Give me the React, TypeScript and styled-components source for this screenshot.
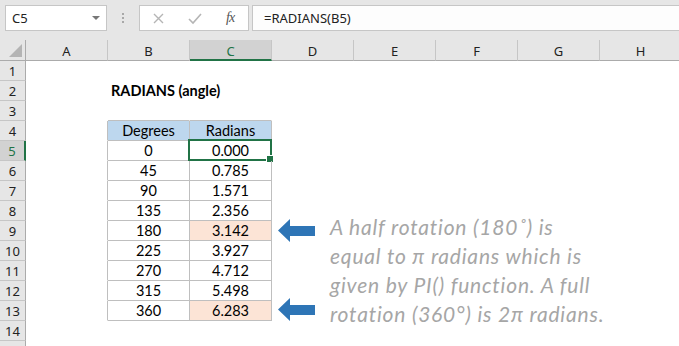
import React from "react"
import styled, { createGlobalStyle } from "styled-components"

const GlobalStyle = createGlobalStyle`
  html, body {
    margin: 0;
    padding: 0;
    background: #ffffff;
    font-family: "Lato", "Liberation Sans", sans-serif;
  }
`

const green = "#217346"
const headerBg = "#e6e6e6"
const tableBorder = "#bfbfbf"

const Window = styled.div`
  width: 679px;
  height: 346px;
  overflow: hidden;
  position: relative;
  background: #ffffff;
`

const Toolbar = styled.div`
  height: 40px;
  background: ${headerBg};
  display: flex;
  align-items: flex-start;
  padding-top: 5px;
  box-sizing: border-box;
`

const NameBox = styled.div`
  margin-left: 5px;
  width: 102px;
  height: 26px;
  box-sizing: border-box;
  background: #ffffff;
  border: 1px solid #c6c6c6;
  display: flex;
  align-items: center;
  justify-content: space-between;
  padding: 0 6px 0 6px;
  font-family: "Noto Sans", "DejaVu Sans", sans-serif;
  font-size: 13px;
  color: #222;
`

const DropArrow = styled.span`
  width: 0;
  height: 0;
  border-left: 4px solid transparent;
  border-right: 4px solid transparent;
  border-top: 4px solid #777;
`

const Grip = styled.div`
  width: 32px;
  height: 26px;
  display: flex;
  flex-direction: column;
  align-items: center;
  justify-content: center;
  gap: 2px;
  & > span {
    width: 2px;
    height: 2px;
    background: #a8a8a8;
  }
`

const FxBox = styled.div`
  width: 110px;
  height: 26px;
  box-sizing: border-box;
  background: #ffffff;
  border: 1px solid #c6c6c6;
  display: flex;
  align-items: center;
  padding-left: 12px;
  color: #b5b5b5;
  & > svg + svg {
    margin-left: 22px;
  }
`

const Fx = styled.span`
  margin-left: 23px;
  font-family: "Liberation Serif", serif;
  font-style: italic;
  font-size: 14px;
  color: #555;
  letter-spacing: -1px;
`

const FormulaBox = styled.div`
  flex: 1;
  margin-left: 3px;
  height: 26px;
  box-sizing: border-box;
  background: #fdfdfd;
  border: 1px solid #c6c6c6;
  border-right: none;
  display: flex;
  align-items: center;
  padding-left: 11px;
  font-family: "Noto Sans", "DejaVu Sans", sans-serif;
  font-size: 13px;
  color: #222;
`

const Sheet = styled.div`
  display: grid;
  grid-template-columns: 26px repeat(8, 82px);
  grid-template-rows: 21px repeat(15, 20px);
  position: relative;
`

const Corner = styled.div`
  background: ${headerBg};
  border-right: 1px solid #ababab;
  border-bottom: 1px solid #ababab;
  box-sizing: border-box;
  position: relative;
  &::after {
    content: "";
    position: absolute;
    right: 3px;
    bottom: 3px;
    width: 0;
    height: 0;
    border-left: 13px solid transparent;
    border-bottom: 13px solid #b4b4b4;
  }
`

const ColHead = styled.div<{ $active?: boolean }>`
  background: ${(p) => (p.$active ? "#d2d2d2" : headerBg)};
  border-right: 1px solid #c6c6c6;
  border-bottom: ${(p) => (p.$active ? `2px solid ${green}` : "1px solid #ababab")};
  box-sizing: border-box;
  display: flex;
  align-items: center;
  justify-content: center;
  padding-top: 2px;
  font-family: "Noto Sans", "DejaVu Sans", sans-serif;
  font-size: 13px;
  color: ${(p) => (p.$active ? green : "#222")};
`

const RowHead = styled.div<{ $active?: boolean }>`
  background: ${(p) => (p.$active ? "#d2d2d2" : headerBg)};
  border-right: ${(p) => (p.$active ? `2px solid ${green}` : "1px solid #ababab")};
  border-bottom: 1px solid #c6c6c6;
  box-sizing: border-box;
  display: flex;
  align-items: center;
  justify-content: center;
  font-family: "Noto Sans", "DejaVu Sans", sans-serif;
  font-size: 13px;
  color: ${(p) => (p.$active ? green : "#222")};
`

const Cell = styled.div<{ $fill?: string; $right: boolean; $bottom: boolean; $bold?: boolean; $center?: boolean }>`
  position: relative;
  box-sizing: border-box;
  background: ${(p) => p.$fill || "transparent"};
  border-right: 1px solid ${(p) => (p.$right ? tableBorder : "transparent")};
  border-bottom: 1px solid ${(p) => (p.$bottom ? tableBorder : "transparent")};
  display: flex;
  align-items: center;
  justify-content: ${(p) => (p.$center ? "center" : "flex-start")};
  padding: 0 3px;
  font-size: 14.5px;
  font-weight: ${(p) => (p.$bold ? 700 : 400)};
  color: #000;
  white-space: nowrap;
  overflow: visible;
`

const Selection = styled.div`
  position: absolute;
  top: -2px;
  left: -2px;
  right: -1px;
  bottom: -1px;
  border: 2px solid ${green};
  pointer-events: none;
`

const FillHandle = styled.div`
  position: absolute;
  right: -4px;
  bottom: -4px;
  width: 6px;
  height: 6px;
  background: ${green};
  border: 1px solid #ffffff;
`

const Note = styled.div`
  position: absolute;
  left: 330px;
  top: 172px;
  font-family: "Lato", "Liberation Sans", sans-serif;
  font-style: italic;
  font-size: 21px;
  letter-spacing: 0.8px;
  line-height: 29px;
  color: #a6a6a6;
  white-space: nowrap;
`

const Arrow = styled.svg<{ $top: number }>`
  position: absolute;
  left: 277px;
  top: ${(p) => p.$top}px;
`

const COLS = ["A", "B", "C", "D", "E", "F", "G", "H"]
const ROWS = Array.from({ length: 15 }, (_, i) => i + 1)

const data: [string, string][] = [
  ["0", "0.000"],
  ["45", "0.785"],
  ["90", "1.571"],
  ["135", "2.356"],
  ["180", "3.142"],
  ["225", "3.927"],
  ["270", "4.712"],
  ["315", "5.498"],
  ["360", "6.283"],
]

const inTable = (r: number, c: number) => r >= 4 && r <= 13 && (c === 1 || c === 2)

function cellContent(r: number, c: number) {
  if (r === 2 && c === 1) return { text: "RADIANS (angle)", bold: true }
  if (r === 4 && c === 1) return { text: "Degrees", center: true, fill: "#bdd7ee" }
  if (r === 4 && c === 2) return { text: "Radians", center: true, fill: "#bdd7ee" }
  if (r >= 5 && r <= 13 && (c === 1 || c === 2)) {
    const text = data[r - 5][c - 1]
    const fill = c === 2 && (r === 9 || r === 13) ? "#fce4d6" : undefined
    return { text, center: true, fill }
  }
  return null
}

function BlueArrow({ top }: { top: number }) {
  return (
    <Arrow $top={top} width="40" height="26" viewBox="0 0 40 26">
      <path d="M1 12.5 L13 1 L13 8 L38 8 L38 18 L13 18 L13 24 Z" fill="#2e75b6" />
    </Arrow>
  )
}

export default function App() {
  return (
    <Window>
      <GlobalStyle />
      <Toolbar>
        <NameBox>
          C5
          <DropArrow />
        </NameBox>
        <Grip>
          <span />
          <span />
          <span />
        </Grip>
        <FxBox>
          <svg width="13" height="13" viewBox="0 0 13 13">
            <path d="M2 2 L11 11 M11 2 L2 11" stroke="#b5b5b5" strokeWidth="1.4" />
          </svg>
          <svg width="16" height="13" viewBox="0 0 16 13">
            <path d="M2 7 L6 11 L14 2" stroke="#b5b5b5" strokeWidth="1.6" fill="none" />
          </svg>
          <Fx>fx</Fx>
        </FxBox>
        <FormulaBox>=RADIANS(B5)</FormulaBox>
      </Toolbar>
      <Sheet>
        <Corner />
        {COLS.map((c) => (
          <ColHead key={c} $active={c === "C"}>
            {c}
          </ColHead>
        ))}
        {ROWS.map((r) => (
          <React.Fragment key={r}>
            {/* row 15 is cut off by the window, its number falls below the edge */}
            <RowHead $active={r === 5}>{r < 15 ? r : ""}</RowHead>
            {COLS.map((_, c) => {
              const content = cellContent(r, c)
              return (
                <Cell
                  key={c}
                  $right={inTable(r, c) || inTable(r, c + 1)}
                  $bottom={inTable(r, c) || inTable(r + 1, c)}
                  $fill={content?.fill}
                  $bold={content?.bold}
                  $center={content?.center}
                >
                  {content?.text}
                  {r === 5 && c === 2 && (
                    <Selection>
                      <FillHandle />
                    </Selection>
                  )}
                </Cell>
              )
            })}
          </React.Fragment>
        ))}
        <BlueArrow top={178} />
        <BlueArrow top={257} />
        <Note>
          <div>A half rotation (180˚) is</div>
          <div>equal to π radians which is</div>
          <div>given by PI() function. A full</div>
          <div>rotation (360°) is 2π radians.</div>
        </Note>
      </Sheet>
    </Window>
  )
}
